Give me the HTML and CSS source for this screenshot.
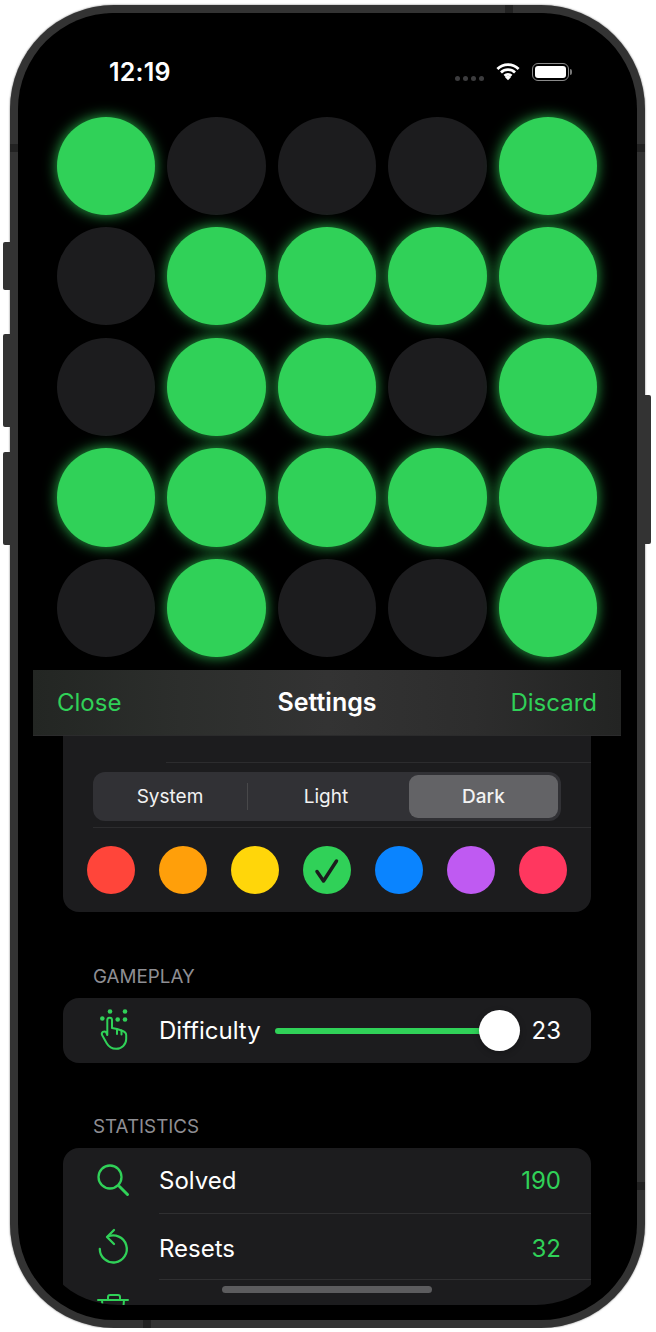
FILE: index.html
```html
<!DOCTYPE html>
<html lang="en">
<head>
    <meta charset="UTF-8">
    <meta name="viewport" content="width=device-width, initial-scale=1.0">
    <title>Settings</title>
    <link rel="stylesheet" href="styles.css">
</head>
<body>
    <div class="phone">
        <span class="side-btn btn-mute"></span>
        <span class="side-btn btn-up"></span>
        <span class="side-btn btn-down"></span>
        <span class="side-btn btn-power"></span>
        <span class="band band-top"></span>
        <span class="band band-left"></span>
        <span class="band band-right"></span>
        <span class="band band-right-low"></span>
        <span class="band band-bottom"></span>

        <div class="bezel">
            <div class="screen">
                <div class="status-bar">
                    <span class="time">12:19</span>
                    <div class="status-icons">
                        <span class="signal"><i></i><i></i><i></i><i></i></span>
                        <svg class="wifi" width="24" height="18" viewBox="0 1 26 19">
                            <path d="M1.500 7.200a16.500 16.500 0 0 1 23 0M5.400 11a11 11 0 0 1 15.200 0M9.200 14.700a5.600 5.600 0 0 1 7.600 0" fill="none" stroke="#fff" stroke-width="3"/>
                            <path d="M13 19.500l-3.200-3.400a4.600 4.600 0 0 1 6.400 0z" fill="#fff"/>
                        </svg>
                        <span class="battery"><i class="battery-fill"></i></span>
                        <span class="battery-nub"></span>
                    </div>
                </div>

                <div class="board">
                    <span class="cell on"></span><span class="cell"></span><span class="cell"></span><span class="cell"></span><span class="cell on"></span>
                    <span class="cell"></span><span class="cell on"></span><span class="cell on"></span><span class="cell on"></span><span class="cell on"></span>
                    <span class="cell"></span><span class="cell on"></span><span class="cell on"></span><span class="cell"></span><span class="cell on"></span>
                    <span class="cell on"></span><span class="cell on"></span><span class="cell on"></span><span class="cell on"></span><span class="cell on"></span>
                    <span class="cell"></span><span class="cell on"></span><span class="cell"></span><span class="cell"></span><span class="cell on"></span>
                </div>

                <div class="nav-bar">
                    <span class="nav-btn">Close</span>
                    <span class="nav-title">Settings</span>
                    <span class="nav-btn nav-right">Discard</span>
                </div>

                <div class="card">
                    <div class="clipped-row"></div>
                    <div class="segment-row">
                        <div class="segments">
                            <span class="segment segment-first">System</span>
                            <span class="segment-divider"></span>
                            <span class="segment">Light</span>
                            <span class="segment selected">Dark</span>
                        </div>
                    </div>
                    <div class="swatches">
                        <span class="swatch red"></span>
                        <span class="swatch orange"></span>
                        <span class="swatch yellow"></span>
                        <span class="swatch green">
                            <svg width="48" height="48" viewBox="0 0 48 48"><path d="M14 25.500l6.500 9.500L33.500 15" fill="none" stroke="#1c1c1e" stroke-width="3.500" stroke-linecap="round" stroke-linejoin="round"/></svg>
                        </span>
                        <span class="swatch blue"></span>
                        <span class="swatch purple"></span>
                        <span class="swatch pink"></span>
                    </div>
                </div>

                <h3 class="section-label">GAMEPLAY</h3>
                <div class="card">
                    <div class="row">
                        <svg class="row-icon" width="40" height="44" viewBox="0 0 40 44" fill="none" stroke="#30d158" stroke-width="2" stroke-linecap="round" stroke-linejoin="round">
                            <g fill="#30d158" stroke="none">
                                <circle cx="17" cy="3.500" r="2.300"/><circle cx="32" cy="3.500" r="2.300"/>
                                <circle cx="9.300" cy="10.500" r="2.300"/><circle cx="24.700" cy="11.500" r="2.300"/><circle cx="32" cy="11.500" r="2.300"/>
                            </g>
                            <path d="M14.300 27V12a2.350 2.350 0 0 1 4.700 0v8l5 1 4.500 1.500c3 1 4.700 2.300 4.700 4.500v4c0 5.500-4.500 9.800-10 9.800-4.500 0-7.500-2-9.500-5.500l-4.500-8c-1.500-3 2-5 4-3z"/>
                            <path d="M24 21.500V26M28.500 22.500V26.500"/>
                        </svg>
                        <span class="row-title">Difficulty</span>
                        <div class="slider">
                            <span class="slider-track"></span>
                            <span class="slider-knob"></span>
                        </div>
                        <span class="row-value white">23</span>
                    </div>
                </div>

                <h3 class="section-label section-stats">STATISTICS</h3>
                <div class="card">
                    <div class="row">
                        <svg class="row-icon" width="40" height="40" viewBox="0 0 40 40" fill="none" stroke="#30d158" stroke-width="2.300" stroke-linecap="round">
                            <circle cx="17" cy="17" r="11.500"/>
                            <path d="M26.500 26.500L34.500 34.500" stroke-width="3"/>
                        </svg>
                        <span class="row-title">Solved</span>
                        <span class="row-value">190</span>
                    </div>
                    <div class="row row-low">
                        <svg class="row-icon" width="40" height="40" viewBox="0 0 40 40" fill="none" stroke="#30d158" stroke-width="2.300" stroke-linecap="round" stroke-linejoin="round">
                            <path d="M14.500 8.800A13.500 13.500 0 1 1 6.800 21"/>
                            <path d="M21 2l-7 7 7 7"/>
                        </svg>
                        <span class="row-title">Resets</span>
                        <span class="row-value">32</span>
                    </div>
                    <div class="row row-low">
                        <svg class="row-icon" width="40" height="40" viewBox="0 0 40 40" fill="none" stroke="#30d158" stroke-width="2" stroke-linecap="round" stroke-linejoin="round">
                            <path d="M5 6h30M15 6V3a2 2 0 0 1 2-2h8a2 2 0 0 1 2 2v3M9 6l2 24h18l2-24"/>
                        </svg>
                        <span class="row-title">Discards</span>
                    </div>
                </div>

                <span class="home-bar"></span>
            </div>
        </div>
    </div>
</body>
</html>
```

FILE: styles.css
```css
/* Page and device frame */
body {
    margin: 0;
    background-color: #fff;
    font-family: Inter, "Liberation Sans", sans-serif;
    color: #fff;
}

.phone {
    position: relative;
    box-sizing: border-box;
    width: 635px;
    height: 1323px;
    margin: 5px 0 0 10px;
    padding: 8px;
    background-color: #333;
    border-radius: 104px;
    box-shadow: 0 0 2px rgba(0, 0, 0, 0.6);
}

.bezel {
    height: 100%;
    padding: 0 16px 0 15px;
    box-sizing: border-box;
    background-color: #000;
    border-radius: 96px;
}

.side-btn {
    position: absolute;
    width: 7px;
    background-color: #333;
    border-radius: 2px 0 0 2px;
}

.btn-mute { left: -7px; top: 237px; height: 48px; }
.btn-up { left: -7px; top: 329px; height: 93px; }
.btn-down { left: -7px; top: 447px; height: 93px; }
.btn-power { right: -6px; top: 390px; height: 149px; width: 6px; border-radius: 0 2px 2px 0; }

.band {
    position: absolute;
    background-color: #222;
}

.band-top { left: 495px; top: 0; width: 8px; height: 8px; }
.band-left { left: 0; top: 139px; width: 8px; height: 8px; }
.band-right { right: 0; top: 139px; width: 8px; height: 8px; }
.band-right-low { right: 0; top: 1177px; width: 8px; height: 8px; }
.band-bottom { left: 133px; bottom: 0; width: 8px; height: 8px; }

/* Screen */
.screen {
    position: relative;
    height: 1292px;
    overflow: hidden;
    border-radius: 85px;
    background-color: #000;
}

.status-bar {
    display: flex;
    justify-content: space-between;
    box-sizing: border-box;
    height: 103.500px;
    padding: 46px 49px 0 76px;
}

.time {
    font-size: 25px;
    font-weight: 600;
    line-height: 26px;
    letter-spacing: 0.2px;
}

.status-icons {
    display: flex;
    align-items: flex-start;
    height: 18px;
    margin-top: 4px;
}

.signal {
    display: flex;
    gap: 3px;
    margin: 13px 12px 0 0;
}

.signal i {
    width: 5px;
    height: 5px;
    border-radius: 50%;
    background-color: #3c3c3e;
}

.wifi {
    margin-right: 12px;
}

.battery {
    box-sizing: border-box;
    width: 37px;
    height: 18px;
    padding: 2px;
    border: 1.500px solid #8a8a8a;
    border-radius: 6px;
}

.battery-fill {
    display: block;
    height: 100%;
    background-color: #fff;
    border-radius: 3px;
}

.battery-nub {
    width: 2px;
    height: 6px;
    margin: 6px 0 0 1px;
    background-color: #777;
    border-radius: 0 2px 2px 0;
}

/* Game board */
.board {
    display: grid;
    grid-template-columns: repeat(5, 98.400px);
    grid-auto-rows: 98.400px;
    gap: 12.200px;
    margin-left: 23.700px;
}

.cell {
    border-radius: 50%;
    background-color: #1c1c1e;
}

.cell.on {
    background-color: #30d158;
    box-shadow: 0 0 14px rgba(48, 209, 88, 0.85);
}

/* Navigation bar */
.nav-bar {
    position: relative;
    display: flex;
    align-items: center;
    box-sizing: border-box;
    height: 66px;
    margin-top: 12.500px;
    padding: 0 24px;
    background: linear-gradient(90deg, #232623 0%, #2c2e2c 25%, #333 50%, #2d2d2d 75%, #232423 100%);
    border-bottom: 1px solid #2b2b2c;
}

.nav-btn {
    flex: 1;
    font-size: 24px;
    color: #30d158;
}

.nav-right {
    text-align: right;
}

.nav-title {
    font-size: 25px;
    font-weight: 600;
}

/* Settings lists */
.card {
    margin: 0 30px;
    background-color: #1c1c1e;
    border-radius: 16px;
    overflow: hidden;
}

.nav-bar + .card {
    border-radius: 0 0 16px 16px;
}

.clipped-row {
    height: 26px;
    margin-left: 103px;
    border-bottom: 1px solid #2c2c2e;
}

.segment-row {
    margin-left: 30px;
    padding: 9px 30px 6px 0;
    border-bottom: 1px solid #2c2c2e;
}

.segments {
    display: grid;
    grid-template-columns: 151px 1px 156px 1fr;
    align-items: center;
    height: 49px;
    padding: 0 3px;
    background-color: #313135;
    border-radius: 12px;
    font-size: 19px;
}

.segment {
    display: flex;
    justify-content: center;
    align-items: center;
    height: 43px;
    color: #f2f2f2;
}

.segment-first {
    padding-right: 3px;
}

.segment.selected {
    margin-left: 5px;
    background-color: #636366;
    border-radius: 9px;
    font-weight: 500;
}

.segment-divider {
    height: 27px;
    background-color: #48484a;
}

.swatches {
    display: flex;
    justify-content: space-between;
    padding: 18px 24px 18px;
}

.swatch {
    width: 48px;
    height: 48px;
    border-radius: 50%;
}

.swatch svg {
    display: block;
}

.red { background-color: #ff453a; }
.orange { background-color: #ff9f0a; }
.yellow { background-color: #ffd60a; }
.green { background-color: #30d158; }
.blue { background-color: #0a84ff; }
.purple { background-color: #bf5af2; }
.pink { background-color: #ff375f; }

.section-label {
    margin: 54px 0 10px 60px;
    font-size: 18.800px;
    font-weight: 400;
    line-height: 22px;
    color: #8e8e93;
}

.section-stats {
    margin-top: 53px;
}

.row {
    position: relative;
    display: flex;
    align-items: center;
    box-sizing: border-box;
    height: 65px;
    padding: 0 30px;
    font-size: 24px;
}

.row + .row::before {
    content: "";
    position: absolute;
    left: 96px;
    right: 0;
    top: 0;
    height: 1px;
    background-color: #2f2f31;
}

.row-low {
    height: 66px;
    padding-top: 5px;
}

.row-icon {
    flex: none;
    margin-right: 26px;
}

.row-title {
    flex: 1;
}

.row .row-title:has(+ .slider) {
    flex: none;
}

.row-value {
    color: #30d158;
}

.row-value.white {
    color: #fff;
}

/* Difficulty slider */
.slider {
    position: relative;
    flex: 1;
    height: 41px;
    margin: 0 12px 0 14px;
}

.slider-track {
    position: absolute;
    left: 0;
    right: 20px;
    top: 18px;
    height: 6px;
    background-color: #30d158;
    border-radius: 3px;
}

.slider-knob {
    position: absolute;
    right: 0;
    top: 0;
    width: 41px;
    height: 41px;
    background-color: #fff;
    border-radius: 50%;
    box-shadow: 0 2px 6px rgba(0, 0, 0, 0.25);
}

.home-bar {
    position: absolute;
    left: 189px;
    bottom: 12px;
    width: 210px;
    height: 7px;
    background-color: #5c5c5e;
    border-radius: 4px;
}
```
